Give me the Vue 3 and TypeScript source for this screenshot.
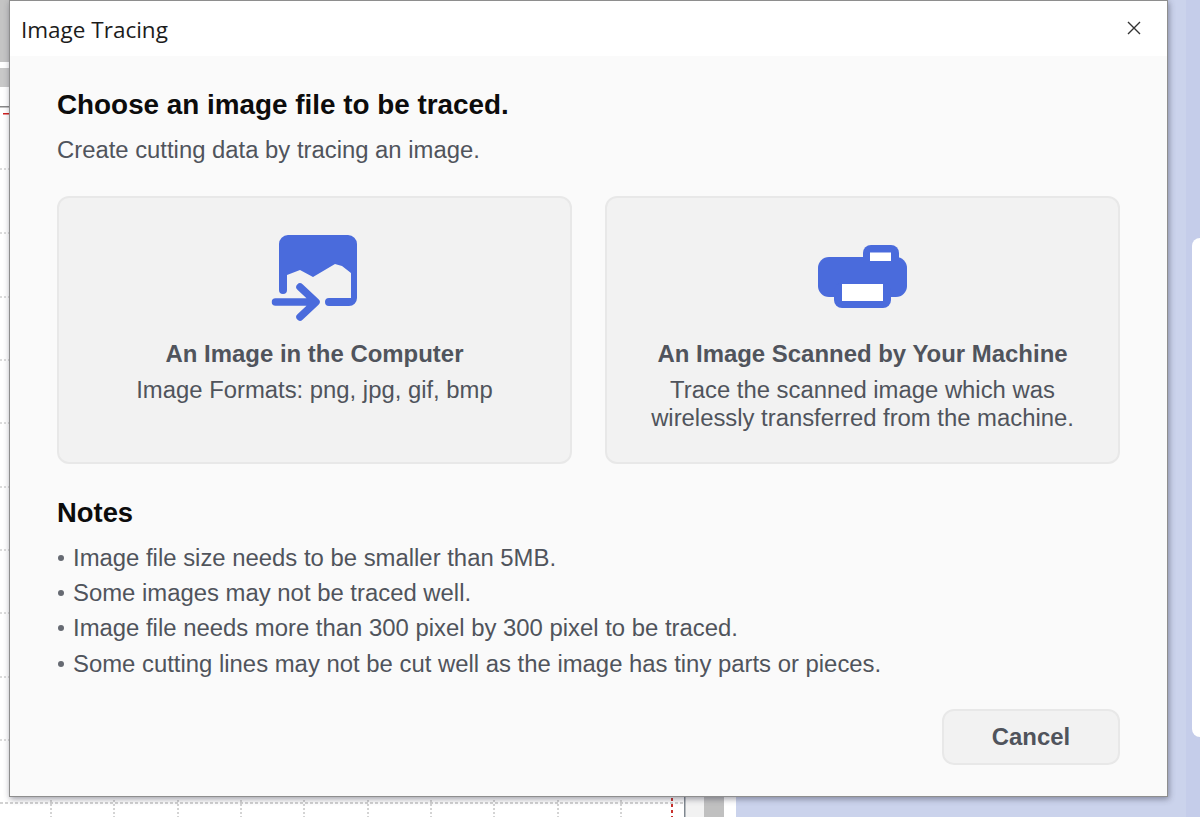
<script setup lang="ts">
const notes: string[] = [
  'Image file size needs to be smaller than 5MB.',
  'Some images may not be traced well.',
  'Image file needs more than 300 pixel by 300 pixel to be traced.',
  'Some cutting lines may not be cut well as the image has tiny parts or pieces.',
]
const xTicks: number[] = [51, 114, 178, 241, 304, 368, 431, 494, 558, 621]
const yTicks: number[] = [169, 233, 297, 360, 423, 487, 550, 613, 677, 740]
</script>

<template>
  <div class="page">
    <svg class="backdrop" width="1200" height="817" viewBox="0 0 1200 817" aria-hidden="true">
      <rect width="1200" height="817" fill="#ffffff" />
      <rect x="736" width="464" height="817" fill="#cbd3ec" />
      <rect x="1186" width="14" height="817" fill="#c5cdea" />
      <rect x="1192" y="238" width="20" height="499" rx="8" fill="#ffffff" />
      <rect y="0" width="9" height="62" fill="#c4c4c4" />
      <rect y="68" width="9" height="19" fill="#c8c8c8" />
      <rect y="106" width="9" height="1.5" fill="#888888" />
      <rect x="3" y="113" width="6" height="1.5" fill="#d02020" />
      <rect x="685" y="797" width="19" height="20" fill="#f2f2f2" />
      <rect x="704" y="797" width="20" height="20" fill="#c0c0c0" />
      <rect x="684" y="797" width="1.5" height="20" fill="#808890" />
      <line x1="0" y1="803" x2="684" y2="803" stroke="#c4c4c4" stroke-width="1.5" stroke-dasharray="3 2 3 2" />
      <line v-for="x in xTicks" :key="x" :x1="x" y1="800" :x2="x" y2="817" stroke="#a8a8a8" stroke-dasharray="2 2" />
      <line v-for="y in yTicks" :key="y" x1="0" :y1="y" x2="9" :y2="y" stroke="#b8b8b8" stroke-dasharray="2 2" />
      <line x1="672" y1="798" x2="672" y2="817" stroke="#c8302c" stroke-width="2" stroke-dasharray="3 3" />
    </svg>

    <section class="dialog">
      <header class="titlebar">
        <span class="title">Image Tracing</span>
        <button class="close" aria-label="Close">
          <svg width="14" height="14" viewBox="0 0 14 14">
            <path d="M1 1 13 13M13 1 1 13" fill="none" stroke="#333" stroke-width="1.4" />
          </svg>
        </button>
      </header>

      <div class="body">
        <h1 class="heading">Choose an image file to be traced.</h1>
        <p class="lead">Create cutting data by tracing an image.</p>

        <div class="cards">
          <article class="card">
            <svg class="icon" width="90" height="90" viewBox="0.5 0 90 90">
              <path
                fill="#4a6bdc"
                d="M9.5 11a9 9 0 0 1 9-9h60a9 9 0 0 1 9 9v54a8 8 0 0 1-8 8H59.5a4 4 0 0 1 0-8h22V40l-9-7-7-2-22 13-13-7-13 5v15a4 4 0 0 1-8 0z"
              />
              <path
                d="M6 69h40M30.5 54l16 15-16 15"
                fill="none"
                stroke="#4a6bdc"
                stroke-width="7.5"
                stroke-linecap="round"
                stroke-linejoin="round"
              />
            </svg>
            <h2 class="card-title">An Image in the Computer</h2>
            <p class="card-text">Image Formats: png, jpg, gif, bmp</p>
          </article>

          <article class="card">
            <svg class="icon" width="90" height="90" viewBox="1 0 90 90">
              <rect x="46" y="12" width="36" height="24" rx="8" fill="#4a6bdc" />
              <rect x="1" y="24" width="89" height="40" rx="11" fill="#4a6bdc" />
              <rect x="17" y="50" width="57" height="25" rx="8" fill="#4a6bdc" />
              <rect x="53" y="19.5" width="21" height="8.5" fill="#ffffff" />
              <rect x="25" y="51" width="41" height="17" fill="#ffffff" />
            </svg>
            <h2 class="card-title">An Image Scanned by Your Machine</h2>
            <p class="card-text">Trace the scanned image which was<br />wirelessly transferred from the machine.</p>
          </article>
        </div>

        <h2 class="notes-title">Notes</h2>
        <ul class="notes">
          <li v-for="note in notes" :key="note" class="note">{{ note }}</li>
        </ul>

        <div class="actions">
          <button class="cancel">Cancel</button>
        </div>
      </div>
    </section>
  </div>
</template>

<style>
html,
body {
  margin: 0;
  background: #fff;
}
</style>

<style scoped>
.page {
  position: relative;
  width: 1200px;
  height: 817px;
  overflow: hidden;
  font-family: "Liberation Sans", Arial, sans-serif;
}
.backdrop {
  position: absolute;
  inset: 0;
}
.dialog {
  position: absolute;
  left: 9px;
  top: 0;
  width: 1157px;
  height: 795px;
  display: flex;
  flex-direction: column;
  background: #fafafa;
  border: 1px solid #8e8e8e;
  box-shadow: 1px 2px 6px rgba(40, 40, 60, 0.45);
}
.titlebar {
  flex: none;
  height: 55px;
  box-sizing: border-box;
  display: flex;
  align-items: center;
  justify-content: space-between;
  padding: 1px 26px 0 11px;
  background: #fff;
}
.title {
  font-family: "Open Sans", sans-serif;
  font-size: 22.5px;
  color: #1c1c1c;
}
.close {
  display: flex;
  padding: 0 0 2px;
  border: 0;
  background: none;
}
.body {
  flex: 1;
  display: flex;
  flex-direction: column;
  padding: 31px 47px 31px;
}
.heading {
  margin: 0;
  font-size: 27.85px;
  line-height: 36px;
  font-weight: 700;
  color: #0c0c0c;
}
.lead {
  margin: 9px 0 0;
  font-size: 23.85px;
  line-height: 36px;
  color: #50545c;
}
.cards {
  display: flex;
  gap: 33px;
  margin-top: 28px;
}
.card {
  flex: 1;
  height: 268px;
  box-sizing: border-box;
  display: flex;
  flex-direction: column;
  align-items: center;
  padding-top: 35px;
  background: #f2f2f2;
  border: 2px solid #e8e8e8;
  border-radius: 12px;
  text-align: center;
  color: #50545c;
}
.icon {
  display: block;
}
.card-title {
  margin: 16px 0 0;
  font-size: 23.95px;
  line-height: 30px;
  font-weight: 700;
}
.card-text {
  margin: 7px 0 0;
  font-size: 23.85px;
  line-height: 28px;
}
.notes-title {
  margin: 31px 0 0;
  font-size: 27.4px;
  line-height: 36px;
  font-weight: 700;
  color: #0c0c0c;
}
.notes {
  margin: 9px 0 0;
  padding: 0;
  list-style: none;
  font-size: 23.88px;
  line-height: 35.2px;
  color: #50545c;
}
.note::before {
  content: "";
  display: inline-block;
  width: 6px;
  height: 6px;
  margin: 0 9px 0 1px;
  border-radius: 50%;
  background: #666a72;
  vertical-align: 5px;
}
.actions {
  margin-top: auto;
  display: flex;
  justify-content: flex-end;
}
.cancel {
  width: 178px;
  height: 56px;
  box-sizing: border-box;
  font-family: inherit;
  font-size: 23.9px;
  font-weight: 700;
  color: #50545c;
  background: #f2f2f2;
  border: 2px solid #e8e8e8;
  border-radius: 12px;
}
</style>
